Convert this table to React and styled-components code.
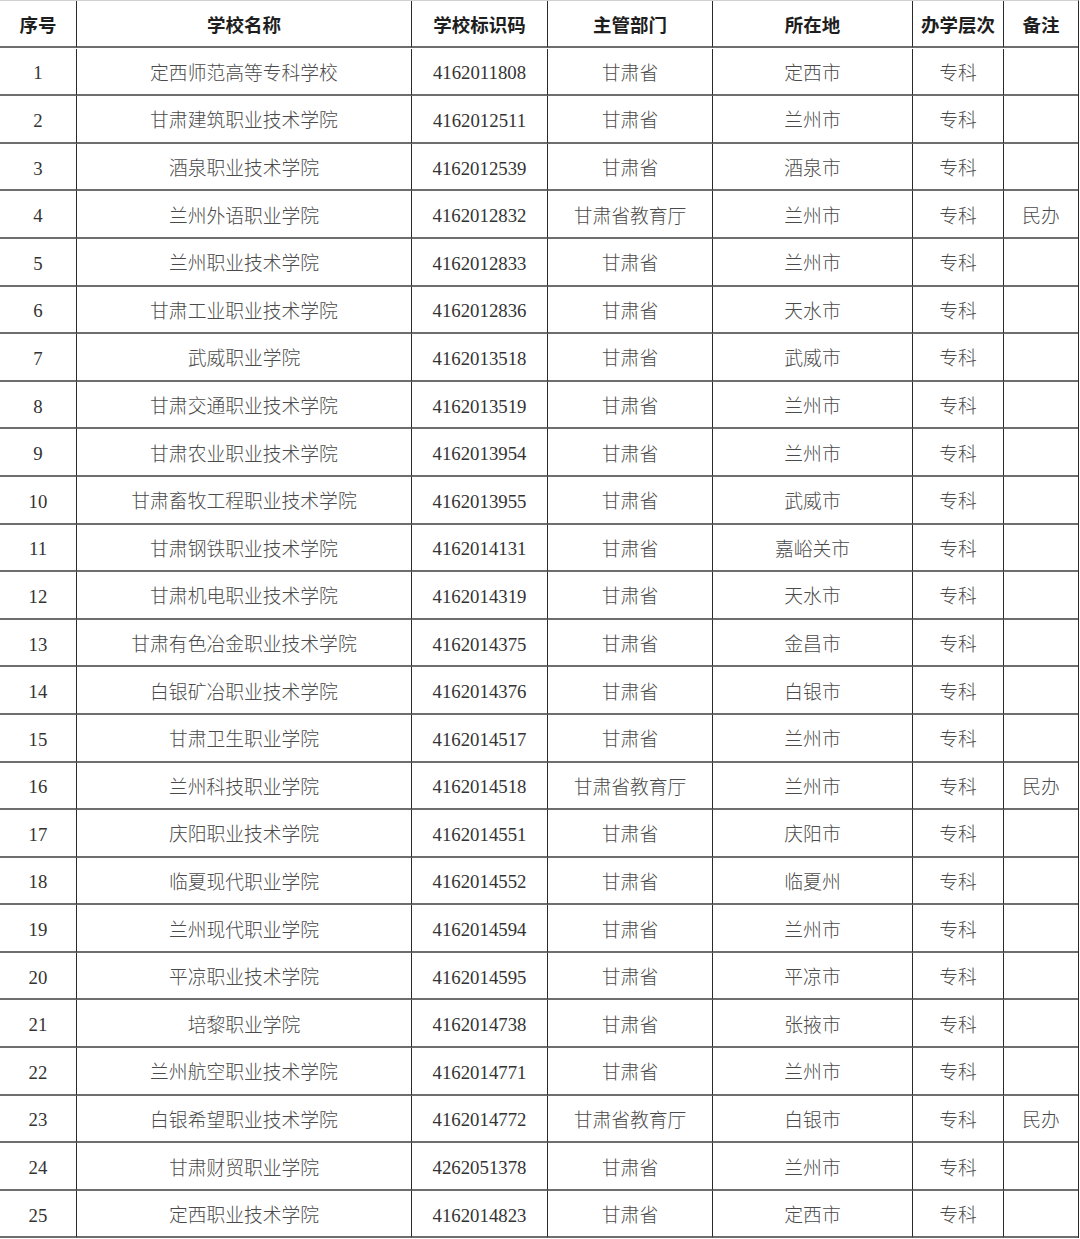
import React from 'react';
import styled, { createGlobalStyle } from 'styled-components';

const GlobalStyle = createGlobalStyle`
  html, body {
    margin: 0;
    padding: 0;
    background: #ffffff;
  }
`;

const Sheet = styled.div`
  width: 1078px;
  display: grid;
  grid-template-columns: 77px 335px 136px 165px 200px 91px 74px;
  grid-auto-rows: 47.6px;
  border-top: 1px solid #d0d0d0;
  border-right: 1px solid #2a2a2a;
`;

const Cell = styled.div`
  display: flex;
  align-items: center;
  justify-content: center;
  box-sizing: border-box;
  padding-top: ${(p) => (p.$num ? '4px' : '0')};
  border-bottom: 2px solid #6e6e6e;
  border-right: ${(p) => (p.$last ? 'none' : '1px solid #2a2a2a')};
  font-family: ${(p) =>
    p.$num ? '"Liberation Serif", serif' : '"Noto Sans CJK SC", "Noto Sans", sans-serif'};
  font-weight: ${(p) => (p.$num ? 400 : 300)};
  font-size: 18.8px;
  color: ${(p) => (p.$num ? '#333333' : '#4a4a4a')};
  white-space: nowrap;
`;

const HeadCell = styled(Cell)`
  height: 47px;
  padding-top: 0;
  font-family: "Noto Sans CJK SC", "Noto Sans", sans-serif;
  font-weight: 700;
  font-size: 18.5px;
  color: #1e1e1e;
`;

const headers = ['序号', '学校名称', '学校标识码', '主管部门', '所在地', '办学层次', '备注'];

const schools = [
  ['定西师范高等专科学校', '4162011808', '甘肃省', '定西市', ''],
  ['甘肃建筑职业技术学院', '4162012511', '甘肃省', '兰州市', ''],
  ['酒泉职业技术学院', '4162012539', '甘肃省', '酒泉市', ''],
  ['兰州外语职业学院', '4162012832', '甘肃省教育厅', '兰州市', '民办'],
  ['兰州职业技术学院', '4162012833', '甘肃省', '兰州市', ''],
  ['甘肃工业职业技术学院', '4162012836', '甘肃省', '天水市', ''],
  ['武威职业学院', '4162013518', '甘肃省', '武威市', ''],
  ['甘肃交通职业技术学院', '4162013519', '甘肃省', '兰州市', ''],
  ['甘肃农业职业技术学院', '4162013954', '甘肃省', '兰州市', ''],
  ['甘肃畜牧工程职业技术学院', '4162013955', '甘肃省', '武威市', ''],
  ['甘肃钢铁职业技术学院', '4162014131', '甘肃省', '嘉峪关市', ''],
  ['甘肃机电职业技术学院', '4162014319', '甘肃省', '天水市', ''],
  ['甘肃有色冶金职业技术学院', '4162014375', '甘肃省', '金昌市', ''],
  ['白银矿冶职业技术学院', '4162014376', '甘肃省', '白银市', ''],
  ['甘肃卫生职业学院', '4162014517', '甘肃省', '兰州市', ''],
  ['兰州科技职业学院', '4162014518', '甘肃省教育厅', '兰州市', '民办'],
  ['庆阳职业技术学院', '4162014551', '甘肃省', '庆阳市', ''],
  ['临夏现代职业学院', '4162014552', '甘肃省', '临夏州', ''],
  ['兰州现代职业学院', '4162014594', '甘肃省', '兰州市', ''],
  ['平凉职业技术学院', '4162014595', '甘肃省', '平凉市', ''],
  ['培黎职业学院', '4162014738', '甘肃省', '张掖市', ''],
  ['兰州航空职业技术学院', '4162014771', '甘肃省', '兰州市', ''],
  ['白银希望职业技术学院', '4162014772', '甘肃省教育厅', '白银市', '民办'],
  ['甘肃财贸职业学院', '4262051378', '甘肃省', '兰州市', ''],
  ['定西职业技术学院', '4162014823', '甘肃省', '定西市', ''],
];

export default function App() {
  return (
    <>
      <GlobalStyle />
      <Sheet>
        {headers.map((h, i) => (
          <HeadCell key={h} $last={i === headers.length - 1}>{h}</HeadCell>
        ))}
        {schools.map(([name, code, dept, city, note], i) => (
          <React.Fragment key={code}>
            <Cell $num>{i + 1}</Cell>
            <Cell>{name}</Cell>
            <Cell $num>{code}</Cell>
            <Cell>{dept}</Cell>
            <Cell>{city}</Cell>
            <Cell>专科</Cell>
            <Cell $last>{note}</Cell>
          </React.Fragment>
        ))}
      </Sheet>
    </>
  );
}
